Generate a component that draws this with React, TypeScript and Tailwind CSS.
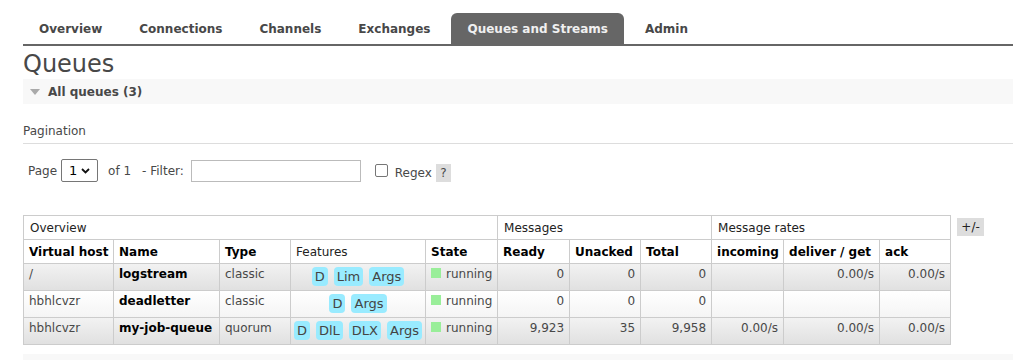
const tabs = ['Overview', 'Connections', 'Channels', 'Exchanges', 'Queues and Streams', 'Admin']

type Queue = {
  vhost: string
  name: string
  type: string
  features: string[]
  ready: string
  unacked: string
  total: string
  incoming: string
  deliver: string
  ack: string
}

const queues: Queue[] = [
  { vhost: '/', name: 'logstream', type: 'classic', features: ['D', 'Lim', 'Args'], ready: '0', unacked: '0', total: '0', incoming: '', deliver: '0.00/s', ack: '0.00/s' },
  { vhost: 'hbhlcvzr', name: 'deadletter', type: 'classic', features: ['D', 'Args'], ready: '0', unacked: '0', total: '0', incoming: '', deliver: '', ack: '' },
  { vhost: 'hbhlcvzr', name: 'my-job-queue', type: 'quorum', features: ['D', 'DlL', 'DLX', 'Args'], ready: '9,923', unacked: '35', total: '9,958', incoming: '0.00/s', deliver: '0.00/s', ack: '0.00/s' },
]

// column widths measured off the management UI
const widths = [90, 106, 71, 135, 72, 72, 71, 71, 72, 96, 71]

const headers = ['Virtual host', 'Name', 'Type', 'Features', 'State', 'Ready', 'Unacked', 'Total', 'incoming', 'deliver / get', 'ack']

export default function App() {
  return (
    <div className="min-h-[360px] bg-white pl-[23px] text-[12px] text-[#484848]" style={{ fontFamily: '"DejaVu Sans", Verdana, sans-serif' }}>
      {/* tabs */}
      <div className="flex h-[46px] items-end border-b-2 border-[#666]">
        {tabs.map((t) => (
          <div
            key={t}
            className={
              t === 'Queues and Streams'
                ? 'mr-[5px] flex h-[31px] items-center rounded-t-[6px] bg-[#666] px-[16px] text-[12px] font-bold whitespace-nowrap text-[#f0f0f0]'
                : 'mr-[5px] flex h-[31px] items-center px-[16px] text-[12px] font-bold whitespace-nowrap text-[#484848]'
            }
          >
            {t}
          </div>
        ))}
      </div>

      <h1 className="mt-[4px] text-[24px] leading-[29px] font-normal text-[#484848]">Queues</h1>

      <div className="flex h-[25px] items-center bg-[#f8f8f8] pl-[7px] font-bold text-[#484848]">
        <span className="mr-[8px] inline-block h-0 w-0 border-x-[5px] border-t-[6px] border-x-transparent border-t-[#aaa]" />
        All queues (3)
      </div>

      <div className="mt-[18px] border-b border-[#ddd] pb-[3px] text-[#484848]">Pagination</div>

      <div className="mt-[15px] flex items-center pl-[5px]">
        <span>Page</span>
        <div className="ml-[4px] flex h-[23px] w-[37px] items-center justify-between rounded-[2px] border border-[#767676] px-[7px] text-[13px] text-black">
          <span>1</span>
          <svg width="9" height="6" viewBox="0 0 9 6"><path d="M1 1l3.5 3.5L8 1" fill="none" stroke="#111" strokeWidth="1.8" /></svg>
        </div>
        <span className="ml-[10px]">of 1</span>
        <span className="ml-[11px]">- Filter:</span>
        <div className="ml-[7px] h-[22px] w-[170px] border border-[#bbb]" />
        <div className="ml-[14px] h-[13px] w-[13px] rounded-[2px] border border-[#767676]" />
        <span className="mt-[4px] ml-[7px]">Regex</span>
        <span className="mt-[4px] ml-[4px] flex h-[18px] w-[15px] items-center justify-center bg-[#ddd]">?</span>
      </div>

      <div className="mt-[33px] flex items-start">
        <table className="table-fixed border-collapse whitespace-nowrap" style={{ width: 927 }}>
          <colgroup>
            {widths.map((w, i) => (
              <col key={i} style={{ width: w }} />
            ))}
          </colgroup>
          <thead>
            <tr className="h-[24px]">
              <th colSpan={5} className="border border-[#ccc] px-[6px] text-left font-normal text-[#222]">Overview</th>
              <th colSpan={3} className="border border-[#ccc] px-[6px] text-left font-normal text-[#222]">Messages</th>
              <th colSpan={3} className="border border-[#ccc] px-[6px] text-left font-normal text-[#222]">Message rates</th>
            </tr>
            <tr className="h-[24px]">
              {headers.map((h) => (
                <th key={h} className={h === 'Features' ? 'border border-[#ccc] px-[5px] text-left font-normal text-[#222]' : 'border border-[#ccc] px-[5px] text-left font-bold text-black'}>
                  {h}
                </th>
              ))}
            </tr>
          </thead>
          <tbody>
            {queues.map((q, i) => {
              const rowBg = i % 2 === 0 ? 'bg-gradient-to-b from-[#f2f2f2] to-[#e0e0e0]' : 'bg-gradient-to-b from-[#ffffff] to-[#f4f4f4]'
              const cell = 'h-[27px] border border-[#ccc] px-[5px] pb-[6px]'
              const num = cell + ' text-right'
              return (
                <tr key={q.name} className={rowBg}>
                  <td className={cell}>{q.vhost}</td>
                  <td className={cell + ' font-bold text-black'}>{q.name}</td>
                  <td className={cell}>{q.type}</td>
                  <td className="h-[27px] border border-[#ccc] px-[2px] pb-[2px]">
                    <div className="flex justify-center gap-[6px]">
                      {q.features.map((f) => (
                        <span key={f} className="rounded-[4px] bg-[#99ebff] px-[3px] text-[13px] leading-[19px] text-[#444]">
                          {f}
                        </span>
                      ))}
                    </div>
                  </td>
                  <td className={cell}>
                    <span className="mr-[5px] inline-block h-[10px] w-[10px] bg-[#99ee99]" />
                    running
                  </td>
                  <td className={num}>{q.ready}</td>
                  <td className={num}>{q.unacked}</td>
                  <td className={num}>{q.total}</td>
                  <td className={num}>{q.incoming}</td>
                  <td className={num}>{q.deliver}</td>
                  <td className={num}>{q.ack}</td>
                </tr>
              )
            })}
          </tbody>
        </table>
        <span className="mt-[3px] ml-[6px] flex h-[18px] w-[27px] items-center justify-center bg-[#ddd] text-[#222]">+/-</span>
      </div>

      <div className="mt-[9px] h-[20px] bg-[#f8f8f8]" />
    </div>
  )
}
